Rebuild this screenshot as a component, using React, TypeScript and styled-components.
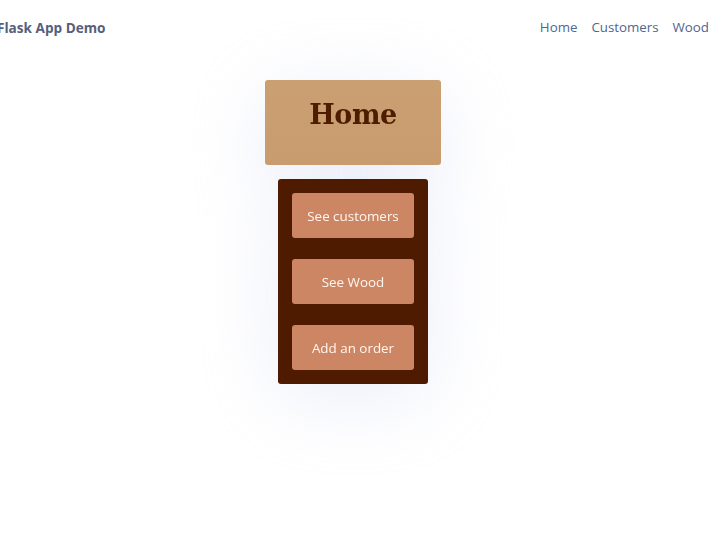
import React from "react";
import styled, { createGlobalStyle } from "styled-components";

const Global = createGlobalStyle`
  html, body { margin: 0; padding: 0; background: #ffffff; }
  body { font-family: "Open Sans", "Noto Sans", sans-serif; min-height: 560px; }
  * { box-sizing: border-box; }
`;

const Header = styled.header`
  display: flex;
  align-items: center;
  justify-content: space-between;
  height: 54px;
  padding: 0 17px 0 0;
`;

const Brand = styled.a`
  margin-left: -3px;
  font-family: "Open Sans", sans-serif;
  font-weight: 700;
  font-size: 13.6px;
  color: #56607c;
  text-decoration: none;
`;

const Nav = styled.nav`
  display: flex;
  gap: 14px;
`;

const NavLink = styled.a`
  font-family: "Open Sans", sans-serif;
  font-size: 13.3px;
  color: #4d6790;
  text-decoration: none;
`;

const Main = styled.main`
  display: flex;
  justify-content: center;
  padding: 26px 20px 0 0;
`;

const Stack = styled.div`
  display: flex;
  flex-direction: column;
  align-items: center;
  gap: 14px;
  width: 176px;
  filter: drop-shadow(0 14px 40px rgba(228, 231, 246, 0.7));
`;

const TitleCard = styled.div`
  width: 176px;
  height: 85px;
  border-radius: 3px;
  background: linear-gradient(180deg, #ca9f72 0%, #c89c6f 100%);
  display: flex;
  align-items: center;
  justify-content: center;
`;

const Title = styled.h1`
  margin: 0 0 16px 0;
  font-family: "DejaVu Serif", serif;
  font-weight: 700;
  font-size: 27px;
  letter-spacing: -0.5px;
  color: #4f1c00;
`;

const Panel = styled.div`
  width: 150px;
  display: flex;
  flex-direction: column;
  gap: 21px;
  padding: 14px;
  border-radius: 3px;
  background: #4f1b00;
`;

const ActionButton = styled.a`
  height: 45px;
  display: flex;
  align-items: center;
  justify-content: center;
  border-radius: 3px;
  background: #cd8663;
  color: #fff6f0;
  font-family: "Open Sans", sans-serif;
  font-size: 13.4px;
  text-decoration: none;
`;

export default function App() {
  return (
    <>
      <Global />
      <Header>
        <Brand href="#">Flask App Demo</Brand>
        <Nav>
          <NavLink href="#">Home</NavLink>
          <NavLink href="#">Customers</NavLink>
          <NavLink href="#">Wood</NavLink>
        </Nav>
      </Header>
      <Main>
        <Stack>
          <TitleCard>
            <Title>Home</Title>
          </TitleCard>
          <Panel>
            <ActionButton href="#">See customers</ActionButton>
            <ActionButton href="#">See Wood</ActionButton>
            <ActionButton href="#">Add an order</ActionButton>
          </Panel>
        </Stack>
      </Main>
    </>
  );
}
